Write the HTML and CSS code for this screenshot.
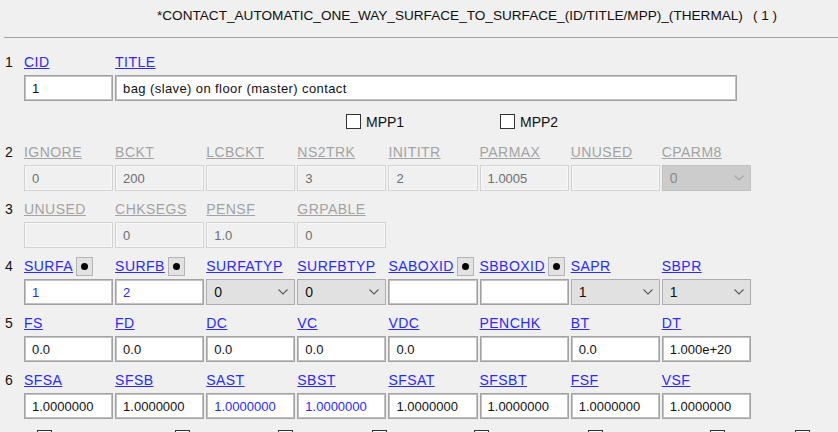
FILE: index.html
```html
<!DOCTYPE html>
<html lang="en">
<head>
<meta charset="utf-8">
<title>*CONTACT_AUTOMATIC_ONE_WAY_SURFACE_TO_SURFACE</title>
<link rel="stylesheet" href="styles.css">
</head>
<body>
<div class="header">
  <span class="title">*CONTACT_AUTOMATIC_ONE_WAY_SURFACE_TO_SURFACE_(ID/TITLE/MPP)_(THERMAL)</span>
  <span class="count">( 1 )</span>
</div>
<div class="sep"></div>

<div class="form">
  <!-- Card 1 -->
  <div class="card">
    <div class="line labels">
      <span class="num">1</span>
      <a class="lbl">CID</a>
      <a class="lbl wide">TITLE</a>
    </div>
    <div class="line fields">
      <span></span>
      <div class="field">1</div>
      <div class="field title-field">bag (slave) on floor (master) contact</div>
    </div>
  </div>

  <div class="mpp">
    <label class="check"><span class="box"></span>MPP1</label>
    <label class="check"><span class="box"></span>MPP2</label>
  </div>

  <!-- Card 2 -->
  <div class="card">
    <div class="line labels">
      <span class="num">2</span>
      <a class="lbl off">IGNORE</a>
      <a class="lbl off">BCKT</a>
      <a class="lbl off">LCBCKT</a>
      <a class="lbl off">NS2TRK</a>
      <a class="lbl off">INITITR</a>
      <a class="lbl off">PARMAX</a>
      <a class="lbl off">UNUSED</a>
      <a class="lbl off">CPARM8</a>
    </div>
    <div class="line fields">
      <span></span>
      <div class="field off">0</div>
      <div class="field off">200</div>
      <div class="field off"></div>
      <div class="field off">3</div>
      <div class="field off">2</div>
      <div class="field off">1.0005</div>
      <div class="field off"></div>
      <div class="select off"><span>0</span>
        <svg class="chev" width="10" height="6" viewBox="0 0 10 6"><polyline points="0.5,0.5 5,5 9.5,0.5"/></svg>
      </div>
    </div>
  </div>

  <!-- Card 3 -->
  <div class="card">
    <div class="line labels">
      <span class="num">3</span>
      <a class="lbl off">UNUSED</a>
      <a class="lbl off">CHKSEGS</a>
      <a class="lbl off">PENSF</a>
      <a class="lbl off">GRPABLE</a>
    </div>
    <div class="line fields">
      <span></span>
      <div class="field off"></div>
      <div class="field off">0</div>
      <div class="field off">1.0</div>
      <div class="field off">0</div>
    </div>
  </div>

  <!-- Card 4 -->
  <div class="card">
    <div class="line labels">
      <span class="num">4</span>
      <span class="lblwrap"><a class="lbl">SURFA</a><span class="pick"><span class="dot"></span></span></span>
      <span class="lblwrap"><a class="lbl">SURFB</a><span class="pick"><span class="dot"></span></span></span>
      <a class="lbl">SURFATYP</a>
      <a class="lbl">SURFBTYP</a>
      <span class="lblwrap"><a class="lbl">SABOXID</a><span class="pick"><span class="dot"></span></span></span>
      <span class="lblwrap"><a class="lbl">SBBOXID</a><span class="pick"><span class="dot"></span></span></span>
      <a class="lbl">SAPR</a>
      <a class="lbl">SBPR</a>
    </div>
    <div class="line fields">
      <span></span>
      <div class="field blue">1</div>
      <div class="field blue">2</div>
      <div class="select"><span>0</span>
        <svg class="chev" width="10" height="6" viewBox="0 0 10 6"><polyline points="0.5,0.5 5,5 9.5,0.5"/></svg>
      </div>
      <div class="select"><span>0</span>
        <svg class="chev" width="10" height="6" viewBox="0 0 10 6"><polyline points="0.5,0.5 5,5 9.5,0.5"/></svg>
      </div>
      <div class="field"></div>
      <div class="field"></div>
      <div class="select"><span>1</span>
        <svg class="chev" width="10" height="6" viewBox="0 0 10 6"><polyline points="0.5,0.5 5,5 9.5,0.5"/></svg>
      </div>
      <div class="select"><span>1</span>
        <svg class="chev" width="10" height="6" viewBox="0 0 10 6"><polyline points="0.5,0.5 5,5 9.5,0.5"/></svg>
      </div>
    </div>
  </div>

  <!-- Card 5 -->
  <div class="card">
    <div class="line labels">
      <span class="num">5</span>
      <a class="lbl">FS</a>
      <a class="lbl">FD</a>
      <a class="lbl">DC</a>
      <a class="lbl">VC</a>
      <a class="lbl">VDC</a>
      <a class="lbl">PENCHK</a>
      <a class="lbl">BT</a>
      <a class="lbl">DT</a>
    </div>
    <div class="line fields">
      <span></span>
      <div class="field">0.0</div>
      <div class="field">0.0</div>
      <div class="field">0.0</div>
      <div class="field">0.0</div>
      <div class="field">0.0</div>
      <div class="field"></div>
      <div class="field">0.0</div>
      <div class="field">1.000e+20</div>
    </div>
  </div>

  <!-- Card 6 -->
  <div class="card">
    <div class="line labels">
      <span class="num">6</span>
      <a class="lbl">SFSA</a>
      <a class="lbl">SFSB</a>
      <a class="lbl">SAST</a>
      <a class="lbl">SBST</a>
      <a class="lbl">SFSAT</a>
      <a class="lbl">SFSBT</a>
      <a class="lbl">FSF</a>
      <a class="lbl">VSF</a>
    </div>
    <div class="line fields">
      <span></span>
      <div class="field">1.0000000</div>
      <div class="field">1.0000000</div>
      <div class="field blue">1.0000000</div>
      <div class="field blue">1.0000000</div>
      <div class="field">1.0000000</div>
      <div class="field">1.0000000</div>
      <div class="field">1.0000000</div>
      <div class="field">1.0000000</div>
    </div>
  </div>

  <div class="bottom">
    <span class="bcheck"><span class="box"></span></span>
    <span class="bcheck"><span class="box"></span></span>
    <span class="bcheck"><span class="box"></span></span>
    <span class="bcheck"><span class="box"></span></span>
    <span class="bcheck"><span class="box"></span></span>
    <span class="bcheck"><span class="box"></span></span>
    <span class="bcheck"><span class="box"></span></span>
    <span class="bcheck"><span class="box"></span></span>
  </div>
</div>
</body>
</html>
```
FILE: styles.css
```css
html, body {
  margin: 0;
  height: 432px;
  overflow: hidden;
}

body {
  background: #f0f0f0;
  color: #000;
  font-family: "Liberation Sans", Arial, sans-serif;
}

.header {
  height: 30px;
  display: flex;
  align-items: center;
  padding-left: 157px;
  font-size: 13.6px;
  color: #111;
}

.count {
  margin-left: 10px;
}

.sep {
  height: 1px;
  margin-top: 7px;
  margin-left: 4px;
  background: #a0a0a0;
}

.form {
  padding-top: 14px;
}

.card {
  margin-bottom: 8px;
}

.line {
  display: grid;
  grid-template-columns: 17px repeat(8, 89.12px);
  column-gap: 2px;
  padding-left: 5px;
}

.labels {
  height: 20px;
  align-items: center;
  margin-bottom: 3px;
}

.fields {
  height: 26px;
}

.num {
  font-size: 14px;
  color: #111;
}

.lbl {
  font-size: 14px;
  letter-spacing: 0.45px;
  color: #2a2aff;
  text-decoration: underline;
  white-space: nowrap;
  cursor: pointer;
}

.lbl.off {
  color: #a3a3a3;
}

.lbl.wide {
  grid-column: span 7;
}

.lblwrap {
  display: flex;
  align-items: center;
}

.pick {
  box-sizing: border-box;
  width: 17px;
  height: 19px;
  margin-left: 3px;
  border: 1px solid #b4b4b4;
  background: #e2e2e2;
  display: flex;
  align-items: center;
  justify-content: center;
}

.dot {
  width: 7px;
  height: 7px;
  border-radius: 50%;
  background: #000;
}

.field {
  box-sizing: border-box;
  height: 26px;
  background: #fff;
  border: 1px solid #a2a2a2;
  box-shadow: inset 0 0 0 1px #c2c2c2;
  padding-left: 7px;
  display: flex;
  align-items: center;
  font-size: 13px;
  color: #111;
  white-space: nowrap;
  overflow: hidden;
}

.field.blue {
  color: #2a2aff;
}

.field.off {
  background: #f0f0f0;
  border-color: #d2d2d2;
  box-shadow: inset 0 0 0 1px #f8f8f8;
  color: #6e6e6e;
}

.title-field {
  grid-column: span 7;
  width: 622px;
  letter-spacing: 0.4px;
}

.select {
  box-sizing: border-box;
  height: 26px;
  background: #e1e1e1;
  border: 1px solid #adadad;
  padding: 0 6px 0 7px;
  display: flex;
  align-items: center;
  justify-content: space-between;
  font-size: 14px;
  color: #111;
}

.chev {
  fill: none;
  stroke: #5a5a5a;
  stroke-width: 1.1;
}

.select.off {
  background: #cccccc;
  border-color: #c2c2c2;
  color: #8a8a8a;
}

.select.off .chev {
  stroke: #a6a6a6;
}

.mpp {
  height: 25px;
  display: flex;
  align-items: center;
  padding-left: 346px;
  margin-bottom: 8px;
}

.check {
  width: 154px;
  display: flex;
  align-items: center;
  gap: 5px;
  font-size: 14px;
  color: #111;
}

.box {
  box-sizing: border-box;
  width: 15px;
  height: 15px;
  border: 1px solid #333;
  background: #fff;
  flex: none;
}

.bottom {
  display: flex;
  padding-top: 3px;
  padding-left: 37px;
}

.bcheck {
  display: flex;
}

.bcheck:nth-child(1) { width: 138px; }
.bcheck:nth-child(2) { width: 103px; }
.bcheck:nth-child(3) { width: 94px; }
.bcheck:nth-child(4) { width: 102px; }
.bcheck:nth-child(5) { width: 114px; }
.bcheck:nth-child(6) { width: 122px; }
.bcheck:nth-child(7) { width: 85px; }
```
